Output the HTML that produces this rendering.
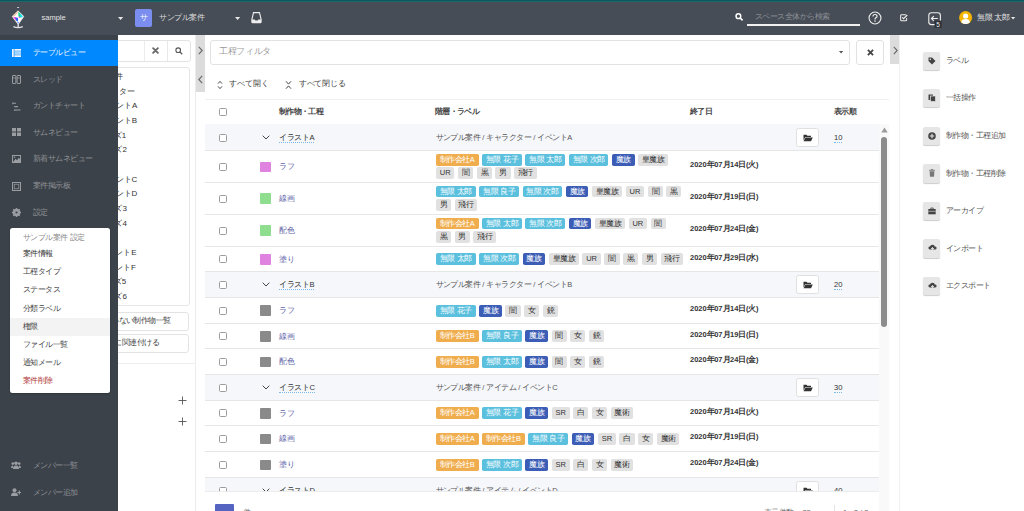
<!DOCTYPE html><html><head><meta charset="utf-8"><style>
*{box-sizing:border-box;margin:0;padding:0}
html,body{width:1024px;height:511px;overflow:hidden;background:#fff}
body{font-family:"Liberation Sans",sans-serif;font-size:7.5px;color:#555;position:relative;line-height:1}
.a{position:absolute;white-space:nowrap}
svg.a{overflow:visible}
.box{position:absolute}
.tg{display:block;height:11.8px;line-height:12.6px;font-size:7.5px;border-radius:1.8px;white-space:nowrap;text-align:center;flex:none}
.tl{display:flex;column-gap:3.6px;margin-bottom:1.8px}
.o{background:#f0ad4e;color:#fff}
.i{background:#5bc0de;color:#fff}
.p{background:#3c5db5;color:#fff}
.g{background:#e1e1e1;color:#333}
</style></head><body>
<div class="box" style="left:0;top:0;width:1024px;height:35px;background:#474d56"></div>
<div class="box" style="left:0;top:0;width:1024px;height:1.4px;background:#07595d"></div>
<div class="box" style="left:0;top:1.4px;width:1024px;height:1px;background:#1f666b"></div>
<svg class="a" style="left:10px;top:5px" width="16" height="25" viewBox="0 0 16 25">
<rect x="7.1" y="2" width="2" height="1.1" rx=".4" fill="#d8d8d8"/>
<path d="M8 5.8 L13.8 11.4 L8.2 19.5 L2.2 11.4 Z" fill="#fff"/>
<path d="M7.8 6.3 L2.9 11.2 L4.2 11.3 L7.6 7.6Z" fill="#ffa060"/>
<path d="M8.3 6.6 L11.6 9.9 L10.6 12.4 L8.4 11.3 Z" fill="#18d890"/>
<path d="M10.2 8.6 L13.2 11.4 L10.6 12.9 Z" fill="#20e0f0"/>
<path d="M8.6 11.5 L10.6 12.3 L9 13.3Z" fill="#d040ff"/>
<path d="M2.9 11.7 L6.2 12.4 L5.6 15.6 Z" fill="#ff38c8"/>
<path d="M5.3 12.3 L8.1 12.9 L7.9 16.4 L5.9 15.6Z" fill="#2c60ff"/>
<path d="M13.3 11.9 L8.6 18.9 L9.6 17.8 L12.2 13.4Z" fill="#ffe860"/>
<path d="M7.1 16.8 L8.9 16.9 L8.2 19Z" fill="#4070ff"/>
<path d="M8 5.8 L13.8 11.4 L8.2 19.5 L2.2 11.4 Z" fill="none" stroke="#ececec" stroke-width="0.7"/>
<rect x="7.5" y="19.3" width="1.4" height="2.6" fill="#eee"/>
<path d="M3.4 21.6 Q8.1 23.8 12.8 21.6" fill="none" stroke="#e4e4e4" stroke-width="1.2"/>
</svg>
<div class="a" style="left:41.5px;top:7.7px;font-size:7.5px;line-height:20px;color:#e4e4e4">sample</div>
<svg class="a" style="left:118px;top:17px" width="5.2" height="3" viewBox="0 0 5.2 3"><path d="M0 0 L5.2 0 L2.6 3Z" fill="#e8e8e8"/></svg>
<div class="box" style="left:135px;top:9px;width:17.2px;height:17.6px;background:#7b8ef0;border-radius:2px"></div>
<div class="a" style="left:139.80px;top:12.05px;font-size:8px;line-height:12px;color:#fff;">サ</div>
<div class="a" style="left:159.00px;top:12.25px;font-size:7.5px;line-height:12px;color:#dcdcdc;"><span style="font-size:8px;letter-spacing:-0.50px">サンプル案件</span></div>
<svg class="a" style="left:235px;top:17px" width="5.2" height="3" viewBox="0 0 5.2 3"><path d="M0 0 L5.2 0 L2.6 3Z" fill="#e8e8e8"/></svg>
<svg class="a" style="left:251px;top:11.8px" width="11" height="11" viewBox="0 0 11 11"><path d="M2.5 0.6 H8.5 L10.1 7.4 V10.1 Q10.1 10.6 9.6 10.6 H1.4 Q0.9 10.6 0.9 10.1 V7.4 Z" fill="none" stroke="#eee" stroke-width="1.1"/><path d="M0.9 7.4 H3.6 L4.4 8.5 H6.6 L7.4 7.4 H10.1 V10.6 H0.9Z" fill="#eee"/></svg>
<svg class="a" style="left:735px;top:13.2px" width="9" height="8" viewBox="0 0 9 8"><circle cx="3.4" cy="3.2" r="2.35" fill="none" stroke="#fff" stroke-width="1.5"/><path d="M5.2 5 L7.6 7.3" stroke="#fff" stroke-width="1.7"/></svg>
<div class="a" style="left:754.50px;top:11.15px;font-size:7.55px;line-height:12px;color:#8d9198;"><span style="font-size:8px;letter-spacing:-0.45px">スペース全体から検索</span></div>
<div class="box" style="left:747px;top:24.4px;width:112.6px;height:1.3px;background:#f0f0f0"></div>
<svg class="a" style="left:868px;top:10.5px" width="14" height="14" viewBox="0 0 14 14"><circle cx="7" cy="7" r="5.95" fill="none" stroke="#eee" stroke-width="1.1"/><path d="M5 5.4 Q5 3.5 7 3.5 Q9 3.5 9 5.2 Q9 6.3 7.8 6.9 Q7 7.3 7 8.4" fill="none" stroke="#eee" stroke-width="1.2"/><rect x="6.35" y="9.4" width="1.3" height="1.4" fill="#eee"/></svg>
<svg class="a" style="left:900.2px;top:13.6px" width="8.3" height="7.4" viewBox="0 0 9 8"><path d="M6.4 0.8 H1.6 Q0.7 0.8 0.7 1.7 V6.4 Q0.7 7.3 1.6 7.3 H6.3 Q7.2 7.3 7.2 6.4 V4.4" fill="none" stroke="#eee" stroke-width="1.1"/><path d="M2.4 3.6 L3.9 5.1 L7.9 1.1" fill="none" stroke="#eee" stroke-width="1.3"/></svg>
<svg class="a" style="left:927.5px;top:11.5px" width="16" height="17" viewBox="0 0 16 17"><rect x="0.8" y="0.8" width="11.6" height="11.8" rx="2.6" fill="none" stroke="#eee" stroke-width="1.1"/><path d="M9.8 6.5 H3.6 M5.8 4.2 L3.5 6.5 L5.8 8.8" fill="none" stroke="#eee" stroke-width="1.2"/><rect x="6.6" y="8.6" width="7" height="7.2" fill="#2c2f34"/><text x="10" y="14.6" font-size="6.5" font-family="Liberation Sans" fill="#eee" text-anchor="middle">5</text></svg>
<svg class="a" style="left:959px;top:11.2px" width="14" height="14" viewBox="0 0 14 14"><circle cx="6.6" cy="6.6" r="6.5" fill="#f5b400"/><circle cx="6.6" cy="5" r="2.6" fill="#fff"/><path d="M2.2 11.2 Q2.6 7.9 6.6 7.9 Q10.6 7.9 11 11.2 Q9 13.1 6.6 13.1 Q4.2 13.1 2.2 11.2Z" fill="#fff"/></svg>
<div class="a" style="left:977.00px;top:12.05px;font-size:7.5px;line-height:12px;color:#e6e6e6;"><span style="font-size:8px;letter-spacing:-0.50px">無限</span> <span style="font-size:8px;letter-spacing:-0.50px">太郎</span></div>
<svg class="a" style="left:1011px;top:16.8px" width="4.2" height="2.6" viewBox="0 0 4.2 2.6"><path d="M0 0 L4.2 0 L2.1 2.6Z" fill="#e8e8e8"/></svg>
<div class="box" style="left:0;top:35px;width:118px;height:476px;background:#3c4249;z-index:10">
<div class="box" style="left:0;top:4.6px;width:118px;height:26.4px;background:#0088ff"></div>
<div class="a" style="left:11.5px;top:13.60px"><svg width="9" height="8" viewBox="0 0 9 8"><rect x="0" y="0" width="9" height="8" fill="#f4f8ff"/><path d="M2.1 0 V8 M2.1 2.1 H9 M2.1 4 H9 M2.1 5.9 H9" stroke="#0088ff" stroke-width="0.65"/></svg></div>
<div class="a" style="left:33.00px;top:12.05px;font-size:7.45px;line-height:12px;color:#eaf3ff;"><span style="font-size:8px;letter-spacing:-0.55px">テーブルビュー</span></div>
<div class="a" style="left:11.5px;top:40.20px"><svg width="9" height="9" viewBox="0 0 9 9"><rect x="0.5" y="0.5" width="3.4" height="8" rx="0.5" fill="none" stroke="#9a9da2" stroke-width="1"/><rect x="5.1" y="0.5" width="3.4" height="8" rx="0.5" fill="none" stroke="#9a9da2" stroke-width="1"/><path d="M0.5 3 H3.9 M5.1 3 H8.5" stroke="#9a9da2" stroke-width="0.8"/></svg></div>
<div class="a" style="left:33.00px;top:38.65px;font-size:7.45px;line-height:12px;color:#8e9196;"><span style="font-size:8px;letter-spacing:-0.55px">スレッド</span></div>
<div class="a" style="left:11.5px;top:66.80px"><svg width="9" height="10" viewBox="0 0 9 10"><path d="M0.3 1.2 H4 M0.8 0.4 V2.2 M2.2 4.6 H6 M3.5 8 H8.5 M2.8 7.2 V9" stroke="#9a9da2" stroke-width="1.1" fill="none"/></svg></div>
<div class="a" style="left:33.00px;top:65.25px;font-size:7.45px;line-height:12px;color:#8e9196;"><span style="font-size:8px;letter-spacing:-0.55px">ガントチャート</span></div>
<div class="a" style="left:11.5px;top:93.40px"><svg width="9" height="8" viewBox="0 0 9 8"><rect x="0" y="0" width="4" height="3.5" fill="#9a9da2"/><rect x="5" y="0" width="4" height="3.5" fill="#9a9da2"/><rect x="0" y="4.5" width="4" height="3.5" fill="#9a9da2"/><rect x="5" y="4.5" width="4" height="3.5" fill="#9a9da2"/></svg></div>
<div class="a" style="left:33.00px;top:91.85px;font-size:7.45px;line-height:12px;color:#8e9196;"><span style="font-size:8px;letter-spacing:-0.55px">サムネビュー</span></div>
<div class="a" style="left:11.5px;top:120.00px"><svg width="9" height="8" viewBox="0 0 9 8"><rect x="0.5" y="0.5" width="8" height="7" fill="none" stroke="#9a9da2" stroke-width="1"/><path d="M1 7 L3.5 3.8 L5 5.3 L6.8 2.8 L8 4 V7Z" fill="#9a9da2"/><circle cx="2.5" cy="2.3" r="0.8" fill="#9a9da2"/></svg></div>
<div class="a" style="left:33.00px;top:118.45px;font-size:7.45px;line-height:12px;color:#8e9196;"><span style="font-size:8px;letter-spacing:-0.55px">新着サムネビュー</span></div>
<div class="a" style="left:11.5px;top:146.60px"><svg width="9" height="9" viewBox="0 0 9 9"><rect x="0.5" y="0.5" width="8" height="8" fill="none" stroke="#9a9da2" stroke-width="1"/><rect x="2.2" y="2.2" width="4.6" height="4.6" fill="none" stroke="#9a9da2" stroke-width="0.7"/></svg></div>
<div class="a" style="left:33.00px;top:145.05px;font-size:7.45px;line-height:12px;color:#8e9196;"><span style="font-size:8px;letter-spacing:-0.55px">案件掲示板</span></div>
<div class="a" style="left:11.5px;top:173.40px"><svg width="9" height="9" viewBox="0 0 9 9"><circle cx="4.5" cy="4.5" r="2.9" fill="none" stroke="#9a9da2" stroke-width="1.8"/><path d="M4.5 0 V9 M0 4.5 H9 M1.3 1.3 L7.7 7.7 M7.7 1.3 L1.3 7.7" stroke="#9a9da2" stroke-width="1.4"/><circle cx="4.5" cy="4.5" r="1.1" fill="#3c4249"/></svg></div>
<div class="a" style="left:33.00px;top:171.85px;font-size:7.45px;line-height:12px;color:#8e9196;"><span style="font-size:8px;letter-spacing:-0.55px">設定</span></div>
<div class="a" style="left:11px;top:425.8px"><svg width="10" height="8" viewBox="0 0 10 8"><circle cx="5" cy="2.2" r="1.8" fill="#9a9da2"/><circle cx="1.8" cy="2.6" r="1.3" fill="#9a9da2"/><circle cx="8.2" cy="2.6" r="1.3" fill="#9a9da2"/><path d="M2 8 Q2 4.6 5 4.6 Q8 4.6 8 8Z M0 7 Q0 4.6 2 4.6 V7Z M10 7 Q10 4.6 8 4.6 V7Z" fill="#9a9da2"/></svg></div>
<div class="a" style="left:33.00px;top:424.65px;font-size:7.45px;line-height:12px;color:#8e9196;"><span style="font-size:8px;letter-spacing:-0.55px">メンバー一覧</span></div>
<div class="a" style="left:11px;top:452.8px"><svg width="10" height="8" viewBox="0 0 10 8"><circle cx="3.5" cy="2.2" r="2" fill="#9a9da2"/><path d="M0 8 Q0 4.6 3.5 4.6 Q7 4.6 7 8Z" fill="#9a9da2"/><path d="M8.3 2.5 V6.5 M6.3 4.5 H10" stroke="#9a9da2" stroke-width="1.1"/></svg></div>
<div class="a" style="left:33.00px;top:451.65px;font-size:7.45px;line-height:12px;color:#8e9196;"><span style="font-size:8px;letter-spacing:-0.55px">メンバー追加</span></div>
</div>
<div class="box" style="left:10.3px;top:227.5px;width:99.4px;height:165.6px;background:#fff;border-radius:2.5px;z-index:11;box-shadow:0 1px 2px rgba(0,0,0,.22)">
<div class="box" style="left:0;top:90.1px;width:99.4px;height:18.3px;background:#f3f3f3"></div>
<div class="a" style="left:12.70px;top:4.35px;font-size:7.45px;line-height:12px;color:#8a8a8a;"><span style="font-size:8px;letter-spacing:-0.55px">サンプル案件</span> <span style="font-size:8px;letter-spacing:-0.55px">設定</span></div>
<div class="a" style="left:12.70px;top:20.55px;font-size:7.45px;line-height:12px;color:#333;"><span style="font-size:8px;letter-spacing:-0.55px">案件情報</span></div>
<div class="a" style="left:12.70px;top:38.35px;font-size:7.45px;line-height:12px;color:#444;"><span style="font-size:8px;letter-spacing:-0.55px">工程タイプ</span></div>
<div class="a" style="left:12.70px;top:56.75px;font-size:7.45px;line-height:12px;color:#444;"><span style="font-size:8px;letter-spacing:-0.55px">ステータス</span></div>
<div class="a" style="left:12.70px;top:75.75px;font-size:7.45px;line-height:12px;color:#444;"><span style="font-size:8px;letter-spacing:-0.55px">分類ラベル</span></div>
<div class="a" style="left:12.70px;top:93.55px;font-size:7.45px;line-height:12px;color:#444;"><span style="font-size:8px;letter-spacing:-0.55px">権限</span></div>
<div class="a" style="left:12.70px;top:111.75px;font-size:7.45px;line-height:12px;color:#444;"><span style="font-size:8px;letter-spacing:-0.55px">ファイル一覧</span></div>
<div class="a" style="left:12.70px;top:129.55px;font-size:7.45px;line-height:12px;color:#444;"><span style="font-size:8px;letter-spacing:-0.55px">通知メール</span></div>
<div class="a" style="left:12.70px;top:147.35px;font-size:7.45px;line-height:12px;color:#b23b3e;"><span style="font-size:8px;letter-spacing:-0.55px">案件削除</span></div>
</div>
<div class="box" style="left:118px;top:35px;width:77.5px;height:476px;background:#fff;border-right:1px solid #ececec"></div>
<div class="box" style="left:100px;top:40px;width:90.6px;height:21.5px;border:1px solid #e3e3e3;border-radius:3px;background:#fff"></div>
<div class="box" style="left:144px;top:40.5px;width:1px;height:20.5px;background:#ececec"></div>
<div class="box" style="left:167px;top:40.5px;width:1px;height:20.5px;background:#e8e8e8"></div>
<svg class="a" style="left:152.4px;top:46.8px" width="7" height="7" viewBox="0 0 7 7"><path d="M1.1 1.1 L5.9 5.9 M5.9 1.1 L1.1 5.9" stroke="#666" stroke-width="1.8" stroke-linecap="round"/></svg>
<svg class="a" style="left:174.6px;top:46.5px" width="8" height="8" viewBox="0 0 8 8"><circle cx="3.2" cy="3.2" r="2.3" fill="none" stroke="#555" stroke-width="1.1"/><path d="M4.9 4.9 L7.2 7.2" stroke="#555" stroke-width="1.3"/></svg>
<div class="box" style="left:100px;top:67.3px;width:89.6px;height:239px;border:1px solid #e6e6e6;border-radius:3px;background:#fff"></div>
<div class="a" style="right:901.00px;top:71.05px;font-size:8px;line-height:12px;color:#333;">案件</div>
<div class="a" style="right:888.70px;top:85.75px;font-size:8px;line-height:12px;color:#333;">キャラクター</div>
<div class="a" style="right:886.70px;top:100.45px;font-size:8px;line-height:12px;color:#333;">イベントA</div>
<div class="a" style="right:887.00px;top:115.05px;font-size:8px;line-height:12px;color:#333;">イベントB</div>
<div class="a" style="right:897.70px;top:129.75px;font-size:8px;line-height:12px;color:#333;">グッズ1</div>
<div class="a" style="right:897.10px;top:144.45px;font-size:8px;line-height:12px;color:#333;">グッズ2</div>
<div class="a" style="right:886.70px;top:173.75px;font-size:8px;line-height:12px;color:#333;">イベントC</div>
<div class="a" style="right:886.70px;top:188.45px;font-size:8px;line-height:12px;color:#333;">イベントD</div>
<div class="a" style="right:897.10px;top:203.05px;font-size:8px;line-height:12px;color:#333;">グッズ3</div>
<div class="a" style="right:897.10px;top:217.75px;font-size:8px;line-height:12px;color:#333;">グッズ4</div>
<div class="a" style="right:887.50px;top:247.05px;font-size:8px;line-height:12px;color:#333;">イベントE</div>
<div class="a" style="right:888.00px;top:261.75px;font-size:8px;line-height:12px;color:#333;">イベントF</div>
<div class="a" style="right:897.70px;top:276.45px;font-size:8px;line-height:12px;color:#333;">グッズ5</div>
<div class="a" style="right:897.10px;top:291.05px;font-size:8px;line-height:12px;color:#333;">グッズ6</div>
<div class="box" style="left:100px;top:311.5px;width:89.2px;height:19px;border:1px solid #e3e3e3;border-radius:3px"></div>
<div class="a" style="right:853.30px;top:315.05px;font-size:7.45px;line-height:12px;color:#444;"><span style="font-size:8px;letter-spacing:-0.55px">関連付けられていない制作物一覧</span></div>
<div class="box" style="left:100px;top:333.7px;width:89.2px;height:19px;border:1px solid #e3e3e3;border-radius:3px"></div>
<div class="a" style="right:865.00px;top:337.25px;font-size:7.45px;line-height:12px;color:#444;"><span style="font-size:8px;letter-spacing:-0.55px">選択した階層に関連付ける</span></div>
<div class="box" style="left:118px;top:362.5px;width:77px;height:1px;background:#eee"></div>
<svg class="a" style="left:177.5px;top:396.0px" width="9" height="9" viewBox="0 0 9 9"><path d="M4.5 0.5 V8.5 M0.5 4.5 H8.5" stroke="#555" stroke-width="0.9"/></svg>
<svg class="a" style="left:177.5px;top:416.8px" width="9" height="9" viewBox="0 0 9 9"><path d="M4.5 0.5 V8.5 M0.5 4.5 H8.5" stroke="#555" stroke-width="0.9"/></svg>
<div class="box" style="left:195.5px;top:35px;width:9.5px;height:57px;background:#dcdcdc"></div>
<svg class="a" style="left:197.5px;top:46px" width="5" height="9" viewBox="0 0 5 9"><path d="M0.8 0.8 L4.2 4.5 L0.8 8.2" fill="none" stroke="#6a6a6a" stroke-width="1.15"/></svg>
<svg class="a" style="left:197.5px;top:74.5px" width="5" height="9" viewBox="0 0 5 9"><path d="M4.2 0.8 L0.8 4.5 L4.2 8.2" fill="none" stroke="#6a6a6a" stroke-width="1.15"/></svg>
<div class="box" style="left:890px;top:35px;width:9.7px;height:28.6px;background:#dcdcdc"></div>
<svg class="a" style="left:892.5px;top:45.5px" width="5" height="9" viewBox="0 0 5 9"><path d="M0.8 0.8 L4.2 4.5 L0.8 8.2" fill="none" stroke="#6a6a6a" stroke-width="1.15"/></svg>
<div class="box" style="left:210.3px;top:40px;width:640.2px;height:24.5px;border:1px solid #e2e2e2;border-radius:3px"></div>
<div class="a" style="left:219.30px;top:45.25px;font-size:8.6px;line-height:12px;color:#9a9a9a;"><span style="font-size:9px;letter-spacing:-0.40px">工程フィルタ</span></div>
<svg class="a" style="left:838.8px;top:51.3px" width="4.2" height="2.6" viewBox="0 0 4.2 2.6"><path d="M0 0 L4.2 0 L2.1 2.6Z" fill="#555"/></svg>
<div class="box" style="left:856px;top:40px;width:27.6px;height:24.5px;border:1px solid #e2e2e2;border-radius:3px"></div>
<svg class="a" style="left:866.5px;top:49px" width="7" height="7" viewBox="0 0 7 7"><path d="M0.9 0.9 L6.1 6.1 M6.1 0.9 L0.9 6.1" stroke="#444" stroke-width="1.8"/></svg>
<svg class="a" style="left:216.5px;top:79.8px" width="6" height="10" viewBox="0 0 6 10"><path d="M1 3.6 L3 1.4 L5 3.6 M1 6.4 L3 8.6 L5 6.4" fill="none" stroke="#444" stroke-width="1"/></svg>
<div class="a" style="left:229.00px;top:78.25px;font-size:8px;line-height:12px;color:#444;">すべて開く</div>
<svg class="a" style="left:284.5px;top:79.8px" width="7" height="10" viewBox="0 0 7 10"><path d="M1 1.3 L3.5 4.1 L6 1.3 M1 8.7 L3.5 5.9 L6 8.7" fill="none" stroke="#444" stroke-width="1"/></svg>
<div class="a" style="left:298.80px;top:78.25px;font-size:7.85px;line-height:12px;color:#444;"><span style="font-size:8px;letter-spacing:-0.15px">すべて閉じる</span></div>
<div class="box" style="left:205px;top:98.5px;width:684px;height:1.8px;background:#efefef"></div>
<div class="box" style="left:218.8px;top:107.80px;width:8px;height:8px;border:1px solid #9c9c9c;border-radius:1.6px;background:#fff"></div>
<div class="a" style="left:279.00px;top:106.25px;font-size:7.35px;line-height:12px;color:#444;font-weight:bold;"><span style="font-size:8px;letter-spacing:-0.65px">制作物・工程</span></div>
<div class="a" style="left:435.00px;top:106.25px;font-size:7.35px;line-height:12px;color:#444;font-weight:bold;"><span style="font-size:8px;letter-spacing:-0.65px">階層・ラベル</span></div>
<div class="a" style="left:690.00px;top:106.25px;font-size:7.35px;line-height:12px;color:#444;font-weight:bold;"><span style="font-size:8px;letter-spacing:-0.65px">終了日</span></div>
<div class="a" style="left:834.00px;top:106.25px;font-size:7.35px;line-height:12px;color:#444;font-weight:bold;"><span style="font-size:8px;letter-spacing:-0.65px">表示順</span></div>
<div class="box" style="left:0;top:124.0px;width:889px;height:367.40px;overflow:hidden">
<div class="box" style="left:205px;top:0.00px;width:673.5px;height:27.10px;background:#f5f7fb;border-bottom:1px solid #e6e6e6"></div>
<div class="box" style="left:218.8px;top:9.55px;width:8px;height:8px;border:1px solid #9c9c9c;border-radius:1.6px;background:#fff"></div>
<svg class="a" style="left:262px;top:11.15px" width="8" height="5" viewBox="0 0 8 5"><path d="M0.7 0.7 L4 4 L7.3 0.7" fill="none" stroke="#444" stroke-width="1"/></svg>
<div class="a" style="left:279.00px;top:9.50px;font-size:7.6px;line-height:8.6px;color:#333;border-bottom:1px dotted #7cb8e6;"><span style="font-size:8px;letter-spacing:-0.40px">イラスト</span>A</div>
<div class="a" style="left:435.50px;top:7.80px;font-size:7.45px;line-height:12px;color:#555;"><span style="font-size:8px;letter-spacing:-0.55px">サンプル案件</span> / <span style="font-size:8px;letter-spacing:-0.55px">キャラクター</span> / <span style="font-size:8px;letter-spacing:-0.55px">イベント</span>A</div>
<div class="box" style="left:796.4px;top:3.95px;width:22.8px;height:19.2px;border:1px solid #e0e0e0;border-radius:2.5px;background:#fff"></div>
<svg class="a" style="left:803px;top:9.95px" width="10" height="8" viewBox="0 0 10 8"><path d="M0.5 0.8 H3.5 L4.4 1.8 H8 V2.9 H2.2 L0.5 6.6Z" fill="#333"/><path d="M2.4 3.5 H9.8 L8 7.3 H0.6Z" fill="#333"/></svg>
<div class="a" style="left:834.00px;top:9.50px;font-size:7.6px;line-height:8.6px;color:#333;border-bottom:1px dotted #7cb8e6;">10</div>
<div class="box" style="left:205px;top:27.10px;width:673.5px;height:31.65px;border-bottom:1px solid #e6e6e6"></div>
<div class="box" style="left:218.8px;top:38.93px;width:8px;height:8px;border:1px solid #9c9c9c;border-radius:1.6px;background:#fff"></div>
<div class="box" style="left:260.3px;top:37.58px;width:11px;height:10.7px;border-radius:1px;background:#e083e0"></div>
<div class="a" style="left:279.00px;top:37.18px;font-size:7.5px;line-height:12px;color:#5b5ea6;"><span style="font-size:8px;letter-spacing:-0.50px">ラフ</span></div>
<div class="box" style="left:436px;top:29.73px;width:290px"><div class="tl"><span class="tg o" style="width:42.60px"><span style="font-size:8px;letter-spacing:-0.50px">制作会社</span>A</span><span class="tg i" style="width:39.68px"><span style="font-size:8px;letter-spacing:-0.50px">無限</span> <span style="font-size:8px;letter-spacing:-0.50px">花子</span></span><span class="tg i" style="width:39.68px"><span style="font-size:8px;letter-spacing:-0.50px">無限</span> <span style="font-size:8px;letter-spacing:-0.50px">太郎</span></span><span class="tg i" style="width:39.68px"><span style="font-size:8px;letter-spacing:-0.50px">無限</span> <span style="font-size:8px;letter-spacing:-0.50px">次郎</span></span><span class="tg p" style="width:22.60px"><span style="font-size:8px;letter-spacing:-0.50px">魔族</span></span><span class="tg g" style="width:30.10px"><span style="font-size:8px;letter-spacing:-0.50px">皇魔族</span></span></div><div class="tl"><span class="tg g" style="width:18.44px">UR</span><span class="tg g" style="width:15.10px"><span style="font-size:8px;letter-spacing:-0.50px">闇</span></span><span class="tg g" style="width:15.10px"><span style="font-size:8px;letter-spacing:-0.50px">黒</span></span><span class="tg g" style="width:15.10px"><span style="font-size:8px;letter-spacing:-0.50px">男</span></span><span class="tg g" style="width:22.60px"><span style="font-size:8px;letter-spacing:-0.50px">飛行</span></span></div></div>
<div class="a" style="left:690.00px;top:35.38px;font-size:7.5px;line-height:12px;color:#333;font-weight:bold;">2020<span style="font-size:8px;letter-spacing:-0.50px">年</span>07<span style="font-size:8px;letter-spacing:-0.50px">月</span>14<span style="font-size:8px;letter-spacing:-0.50px">日</span>(<span style="font-size:8px;letter-spacing:-0.50px">火</span>)</div>
<div class="box" style="left:205px;top:58.75px;width:673.5px;height:32.05px;border-bottom:1px solid #e6e6e6"></div>
<div class="box" style="left:218.8px;top:70.78px;width:8px;height:8px;border:1px solid #9c9c9c;border-radius:1.6px;background:#fff"></div>
<div class="box" style="left:260.3px;top:69.43px;width:11px;height:10.7px;border-radius:1px;background:#8fdd8f"></div>
<div class="a" style="left:279.00px;top:69.03px;font-size:7.5px;line-height:12px;color:#5b5ea6;"><span style="font-size:8px;letter-spacing:-0.50px">線画</span></div>
<div class="box" style="left:436px;top:61.58px;width:290px"><div class="tl"><span class="tg i" style="width:39.68px"><span style="font-size:8px;letter-spacing:-0.50px">無限</span> <span style="font-size:8px;letter-spacing:-0.50px">太郎</span></span><span class="tg i" style="width:39.68px"><span style="font-size:8px;letter-spacing:-0.50px">無限</span> <span style="font-size:8px;letter-spacing:-0.50px">良子</span></span><span class="tg i" style="width:39.68px"><span style="font-size:8px;letter-spacing:-0.50px">無限</span> <span style="font-size:8px;letter-spacing:-0.50px">次郎</span></span><span class="tg p" style="width:22.60px"><span style="font-size:8px;letter-spacing:-0.50px">魔族</span></span><span class="tg g" style="width:30.10px"><span style="font-size:8px;letter-spacing:-0.50px">皇魔族</span></span><span class="tg g" style="width:18.44px">UR</span><span class="tg g" style="width:15.10px"><span style="font-size:8px;letter-spacing:-0.50px">闇</span></span><span class="tg g" style="width:15.10px"><span style="font-size:8px;letter-spacing:-0.50px">黒</span></span></div><div class="tl"><span class="tg g" style="width:15.10px"><span style="font-size:8px;letter-spacing:-0.50px">男</span></span><span class="tg g" style="width:22.60px"><span style="font-size:8px;letter-spacing:-0.50px">飛行</span></span></div></div>
<div class="a" style="left:690.00px;top:67.23px;font-size:7.5px;line-height:12px;color:#333;font-weight:bold;">2020<span style="font-size:8px;letter-spacing:-0.50px">年</span>07<span style="font-size:8px;letter-spacing:-0.50px">月</span>19<span style="font-size:8px;letter-spacing:-0.50px">日</span>(<span style="font-size:8px;letter-spacing:-0.50px">日</span>)</div>
<div class="box" style="left:205px;top:90.80px;width:673.5px;height:32.00px;border-bottom:1px solid #e6e6e6"></div>
<div class="box" style="left:218.8px;top:102.80px;width:8px;height:8px;border:1px solid #9c9c9c;border-radius:1.6px;background:#fff"></div>
<div class="box" style="left:260.3px;top:101.45px;width:11px;height:10.7px;border-radius:1px;background:#8fdd8f"></div>
<div class="a" style="left:279.00px;top:101.05px;font-size:7.5px;line-height:12px;color:#5b5ea6;"><span style="font-size:8px;letter-spacing:-0.50px">配色</span></div>
<div class="box" style="left:436px;top:93.60px;width:290px"><div class="tl"><span class="tg o" style="width:42.60px"><span style="font-size:8px;letter-spacing:-0.50px">制作会社</span>A</span><span class="tg i" style="width:39.68px"><span style="font-size:8px;letter-spacing:-0.50px">無限</span> <span style="font-size:8px;letter-spacing:-0.50px">太郎</span></span><span class="tg i" style="width:39.68px"><span style="font-size:8px;letter-spacing:-0.50px">無限</span> <span style="font-size:8px;letter-spacing:-0.50px">次郎</span></span><span class="tg p" style="width:22.60px"><span style="font-size:8px;letter-spacing:-0.50px">魔族</span></span><span class="tg g" style="width:30.10px"><span style="font-size:8px;letter-spacing:-0.50px">皇魔族</span></span><span class="tg g" style="width:18.44px">UR</span><span class="tg g" style="width:15.10px"><span style="font-size:8px;letter-spacing:-0.50px">闇</span></span></div><div class="tl"><span class="tg g" style="width:15.10px"><span style="font-size:8px;letter-spacing:-0.50px">黒</span></span><span class="tg g" style="width:15.10px"><span style="font-size:8px;letter-spacing:-0.50px">男</span></span><span class="tg g" style="width:22.60px"><span style="font-size:8px;letter-spacing:-0.50px">飛行</span></span></div></div>
<div class="a" style="left:690.00px;top:99.25px;font-size:7.5px;line-height:12px;color:#333;font-weight:bold;">2020<span style="font-size:8px;letter-spacing:-0.50px">年</span>07<span style="font-size:8px;letter-spacing:-0.50px">月</span>24<span style="font-size:8px;letter-spacing:-0.50px">日</span>(<span style="font-size:8px;letter-spacing:-0.50px">金</span>)</div>
<div class="box" style="left:205px;top:122.80px;width:673.5px;height:25.00px;border-bottom:1px solid #e6e6e6"></div>
<div class="box" style="left:218.8px;top:131.30px;width:8px;height:8px;border:1px solid #9c9c9c;border-radius:1.6px;background:#fff"></div>
<div class="box" style="left:260.3px;top:129.95px;width:11px;height:10.7px;border-radius:1px;background:#e083e0"></div>
<div class="a" style="left:279.00px;top:129.55px;font-size:7.5px;line-height:12px;color:#5b5ea6;"><span style="font-size:8px;letter-spacing:-0.50px">塗り</span></div>
<div class="box" style="left:436px;top:129.40px;width:290px"><div class="tl"><span class="tg i" style="width:39.68px"><span style="font-size:8px;letter-spacing:-0.50px">無限</span> <span style="font-size:8px;letter-spacing:-0.50px">太郎</span></span><span class="tg i" style="width:39.68px"><span style="font-size:8px;letter-spacing:-0.50px">無限</span> <span style="font-size:8px;letter-spacing:-0.50px">次郎</span></span><span class="tg p" style="width:22.60px"><span style="font-size:8px;letter-spacing:-0.50px">魔族</span></span><span class="tg g" style="width:30.10px"><span style="font-size:8px;letter-spacing:-0.50px">皇魔族</span></span><span class="tg g" style="width:18.44px">UR</span><span class="tg g" style="width:15.10px"><span style="font-size:8px;letter-spacing:-0.50px">闇</span></span><span class="tg g" style="width:15.10px"><span style="font-size:8px;letter-spacing:-0.50px">黒</span></span><span class="tg g" style="width:15.10px"><span style="font-size:8px;letter-spacing:-0.50px">男</span></span><span class="tg g" style="width:22.60px"><span style="font-size:8px;letter-spacing:-0.50px">飛行</span></span></div></div>
<div class="a" style="left:690.00px;top:127.75px;font-size:7.5px;line-height:12px;color:#333;font-weight:bold;">2020<span style="font-size:8px;letter-spacing:-0.50px">年</span>07<span style="font-size:8px;letter-spacing:-0.50px">月</span>29<span style="font-size:8px;letter-spacing:-0.50px">日</span>(<span style="font-size:8px;letter-spacing:-0.50px">水</span>)</div>
<div class="box" style="left:205px;top:147.80px;width:673.5px;height:26.00px;background:#f5f7fb;border-bottom:1px solid #e6e6e6"></div>
<div class="box" style="left:218.8px;top:156.80px;width:8px;height:8px;border:1px solid #9c9c9c;border-radius:1.6px;background:#fff"></div>
<svg class="a" style="left:262px;top:158.40px" width="8" height="5" viewBox="0 0 8 5"><path d="M0.7 0.7 L4 4 L7.3 0.7" fill="none" stroke="#444" stroke-width="1"/></svg>
<div class="a" style="left:279.00px;top:156.75px;font-size:7.6px;line-height:8.6px;color:#333;border-bottom:1px dotted #7cb8e6;"><span style="font-size:8px;letter-spacing:-0.40px">イラスト</span>B</div>
<div class="a" style="left:435.50px;top:155.05px;font-size:7.45px;line-height:12px;color:#555;"><span style="font-size:8px;letter-spacing:-0.55px">サンプル案件</span> / <span style="font-size:8px;letter-spacing:-0.55px">キャラクター</span> / <span style="font-size:8px;letter-spacing:-0.55px">イベント</span>B</div>
<div class="box" style="left:796.4px;top:151.20px;width:22.8px;height:19.2px;border:1px solid #e0e0e0;border-radius:2.5px;background:#fff"></div>
<svg class="a" style="left:803px;top:157.20px" width="10" height="8" viewBox="0 0 10 8"><path d="M0.5 0.8 H3.5 L4.4 1.8 H8 V2.9 H2.2 L0.5 6.6Z" fill="#333"/><path d="M2.4 3.5 H9.8 L8 7.3 H0.6Z" fill="#333"/></svg>
<div class="a" style="left:834.00px;top:156.75px;font-size:7.6px;line-height:8.6px;color:#333;border-bottom:1px dotted #7cb8e6;">20</div>
<div class="box" style="left:205px;top:173.80px;width:673.5px;height:26.00px;border-bottom:1px solid #e6e6e6"></div>
<div class="box" style="left:218.8px;top:182.80px;width:8px;height:8px;border:1px solid #9c9c9c;border-radius:1.6px;background:#fff"></div>
<div class="box" style="left:260.3px;top:181.45px;width:11px;height:10.7px;border-radius:1px;background:#8a8a8a"></div>
<div class="a" style="left:279.00px;top:181.05px;font-size:7.5px;line-height:12px;color:#5b5ea6;"><span style="font-size:8px;letter-spacing:-0.50px">ラフ</span></div>
<div class="box" style="left:436px;top:180.90px;width:290px"><div class="tl"><span class="tg i" style="width:39.68px"><span style="font-size:8px;letter-spacing:-0.50px">無限</span> <span style="font-size:8px;letter-spacing:-0.50px">花子</span></span><span class="tg p" style="width:22.60px"><span style="font-size:8px;letter-spacing:-0.50px">魔族</span></span><span class="tg g" style="width:15.10px"><span style="font-size:8px;letter-spacing:-0.50px">闇</span></span><span class="tg g" style="width:15.10px"><span style="font-size:8px;letter-spacing:-0.50px">女</span></span><span class="tg g" style="width:15.10px"><span style="font-size:8px;letter-spacing:-0.50px">銃</span></span></div></div>
<div class="a" style="left:690.00px;top:179.25px;font-size:7.5px;line-height:12px;color:#333;font-weight:bold;">2020<span style="font-size:8px;letter-spacing:-0.50px">年</span>07<span style="font-size:8px;letter-spacing:-0.50px">月</span>14<span style="font-size:8px;letter-spacing:-0.50px">日</span>(<span style="font-size:8px;letter-spacing:-0.50px">火</span>)</div>
<div class="box" style="left:205px;top:199.80px;width:673.5px;height:25.00px;border-bottom:1px solid #e6e6e6"></div>
<div class="box" style="left:218.8px;top:208.30px;width:8px;height:8px;border:1px solid #9c9c9c;border-radius:1.6px;background:#fff"></div>
<div class="box" style="left:260.3px;top:206.95px;width:11px;height:10.7px;border-radius:1px;background:#8a8a8a"></div>
<div class="a" style="left:279.00px;top:206.55px;font-size:7.5px;line-height:12px;color:#5b5ea6;"><span style="font-size:8px;letter-spacing:-0.50px">線画</span></div>
<div class="box" style="left:436px;top:206.40px;width:290px"><div class="tl"><span class="tg o" style="width:42.60px"><span style="font-size:8px;letter-spacing:-0.50px">制作会社</span>B</span><span class="tg i" style="width:39.68px"><span style="font-size:8px;letter-spacing:-0.50px">無限</span> <span style="font-size:8px;letter-spacing:-0.50px">良子</span></span><span class="tg p" style="width:22.60px"><span style="font-size:8px;letter-spacing:-0.50px">魔族</span></span><span class="tg g" style="width:15.10px"><span style="font-size:8px;letter-spacing:-0.50px">闇</span></span><span class="tg g" style="width:15.10px"><span style="font-size:8px;letter-spacing:-0.50px">女</span></span><span class="tg g" style="width:15.10px"><span style="font-size:8px;letter-spacing:-0.50px">銃</span></span></div></div>
<div class="a" style="left:690.00px;top:204.75px;font-size:7.5px;line-height:12px;color:#333;font-weight:bold;">2020<span style="font-size:8px;letter-spacing:-0.50px">年</span>07<span style="font-size:8px;letter-spacing:-0.50px">月</span>19<span style="font-size:8px;letter-spacing:-0.50px">日</span>(<span style="font-size:8px;letter-spacing:-0.50px">日</span>)</div>
<div class="box" style="left:205px;top:224.80px;width:673.5px;height:26.10px;border-bottom:1px solid #e6e6e6"></div>
<div class="box" style="left:218.8px;top:233.85px;width:8px;height:8px;border:1px solid #9c9c9c;border-radius:1.6px;background:#fff"></div>
<div class="box" style="left:260.3px;top:232.50px;width:11px;height:10.7px;border-radius:1px;background:#8a8a8a"></div>
<div class="a" style="left:279.00px;top:232.10px;font-size:7.5px;line-height:12px;color:#5b5ea6;"><span style="font-size:8px;letter-spacing:-0.50px">配色</span></div>
<div class="box" style="left:436px;top:231.95px;width:290px"><div class="tl"><span class="tg o" style="width:42.60px"><span style="font-size:8px;letter-spacing:-0.50px">制作会社</span>B</span><span class="tg i" style="width:39.68px"><span style="font-size:8px;letter-spacing:-0.50px">無限</span> <span style="font-size:8px;letter-spacing:-0.50px">太郎</span></span><span class="tg p" style="width:22.60px"><span style="font-size:8px;letter-spacing:-0.50px">魔族</span></span><span class="tg g" style="width:15.10px"><span style="font-size:8px;letter-spacing:-0.50px">闇</span></span><span class="tg g" style="width:15.10px"><span style="font-size:8px;letter-spacing:-0.50px">女</span></span><span class="tg g" style="width:15.10px"><span style="font-size:8px;letter-spacing:-0.50px">銃</span></span></div></div>
<div class="a" style="left:690.00px;top:230.30px;font-size:7.5px;line-height:12px;color:#333;font-weight:bold;">2020<span style="font-size:8px;letter-spacing:-0.50px">年</span>07<span style="font-size:8px;letter-spacing:-0.50px">月</span>24<span style="font-size:8px;letter-spacing:-0.50px">日</span>(<span style="font-size:8px;letter-spacing:-0.50px">金</span>)</div>
<div class="box" style="left:205px;top:250.90px;width:673.5px;height:25.80px;background:#f5f7fb;border-bottom:1px solid #e6e6e6"></div>
<div class="box" style="left:218.8px;top:259.80px;width:8px;height:8px;border:1px solid #9c9c9c;border-radius:1.6px;background:#fff"></div>
<svg class="a" style="left:262px;top:261.40px" width="8" height="5" viewBox="0 0 8 5"><path d="M0.7 0.7 L4 4 L7.3 0.7" fill="none" stroke="#444" stroke-width="1"/></svg>
<div class="a" style="left:279.00px;top:259.75px;font-size:7.6px;line-height:8.6px;color:#333;border-bottom:1px dotted #7cb8e6;"><span style="font-size:8px;letter-spacing:-0.40px">イラスト</span>C</div>
<div class="a" style="left:435.50px;top:258.05px;font-size:7.45px;line-height:12px;color:#555;"><span style="font-size:8px;letter-spacing:-0.55px">サンプル案件</span> / <span style="font-size:8px;letter-spacing:-0.55px">アイテム</span> / <span style="font-size:8px;letter-spacing:-0.55px">イベント</span>C</div>
<div class="box" style="left:796.4px;top:254.20px;width:22.8px;height:19.2px;border:1px solid #e0e0e0;border-radius:2.5px;background:#fff"></div>
<svg class="a" style="left:803px;top:260.20px" width="10" height="8" viewBox="0 0 10 8"><path d="M0.5 0.8 H3.5 L4.4 1.8 H8 V2.9 H2.2 L0.5 6.6Z" fill="#333"/><path d="M2.4 3.5 H9.8 L8 7.3 H0.6Z" fill="#333"/></svg>
<div class="a" style="left:834.00px;top:259.75px;font-size:7.6px;line-height:8.6px;color:#333;border-bottom:1px dotted #7cb8e6;">30</div>
<div class="box" style="left:205px;top:276.70px;width:673.5px;height:25.30px;border-bottom:1px solid #e6e6e6"></div>
<div class="box" style="left:218.8px;top:285.35px;width:8px;height:8px;border:1px solid #9c9c9c;border-radius:1.6px;background:#fff"></div>
<div class="box" style="left:260.3px;top:284.00px;width:11px;height:10.7px;border-radius:1px;background:#8a8a8a"></div>
<div class="a" style="left:279.00px;top:283.60px;font-size:7.5px;line-height:12px;color:#5b5ea6;"><span style="font-size:8px;letter-spacing:-0.50px">ラフ</span></div>
<div class="box" style="left:436px;top:283.45px;width:290px"><div class="tl"><span class="tg o" style="width:42.60px"><span style="font-size:8px;letter-spacing:-0.50px">制作会社</span>A</span><span class="tg i" style="width:39.68px"><span style="font-size:8px;letter-spacing:-0.50px">無限</span> <span style="font-size:8px;letter-spacing:-0.50px">花子</span></span><span class="tg p" style="width:22.60px"><span style="font-size:8px;letter-spacing:-0.50px">魔族</span></span><span class="tg g" style="width:18.02px">SR</span><span class="tg g" style="width:15.10px"><span style="font-size:8px;letter-spacing:-0.50px">白</span></span><span class="tg g" style="width:15.10px"><span style="font-size:8px;letter-spacing:-0.50px">女</span></span><span class="tg g" style="width:22.60px"><span style="font-size:8px;letter-spacing:-0.50px">魔術</span></span></div></div>
<div class="a" style="left:690.00px;top:281.80px;font-size:7.5px;line-height:12px;color:#333;font-weight:bold;">2020<span style="font-size:8px;letter-spacing:-0.50px">年</span>07<span style="font-size:8px;letter-spacing:-0.50px">月</span>14<span style="font-size:8px;letter-spacing:-0.50px">日</span>(<span style="font-size:8px;letter-spacing:-0.50px">火</span>)</div>
<div class="box" style="left:205px;top:302.00px;width:673.5px;height:26.00px;border-bottom:1px solid #e6e6e6"></div>
<div class="box" style="left:218.8px;top:311.00px;width:8px;height:8px;border:1px solid #9c9c9c;border-radius:1.6px;background:#fff"></div>
<div class="box" style="left:260.3px;top:309.65px;width:11px;height:10.7px;border-radius:1px;background:#8a8a8a"></div>
<div class="a" style="left:279.00px;top:309.25px;font-size:7.5px;line-height:12px;color:#5b5ea6;"><span style="font-size:8px;letter-spacing:-0.50px">線画</span></div>
<div class="box" style="left:436px;top:309.10px;width:290px"><div class="tl"><span class="tg o" style="width:42.60px"><span style="font-size:8px;letter-spacing:-0.50px">制作会社</span>A</span><span class="tg o" style="width:42.60px"><span style="font-size:8px;letter-spacing:-0.50px">制作会社</span>B</span><span class="tg i" style="width:39.68px"><span style="font-size:8px;letter-spacing:-0.50px">無限</span> <span style="font-size:8px;letter-spacing:-0.50px">良子</span></span><span class="tg p" style="width:22.60px"><span style="font-size:8px;letter-spacing:-0.50px">魔族</span></span><span class="tg g" style="width:18.02px">SR</span><span class="tg g" style="width:15.10px"><span style="font-size:8px;letter-spacing:-0.50px">白</span></span><span class="tg g" style="width:15.10px"><span style="font-size:8px;letter-spacing:-0.50px">女</span></span><span class="tg g" style="width:22.60px"><span style="font-size:8px;letter-spacing:-0.50px">魔術</span></span></div></div>
<div class="a" style="left:690.00px;top:307.45px;font-size:7.5px;line-height:12px;color:#333;font-weight:bold;">2020<span style="font-size:8px;letter-spacing:-0.50px">年</span>07<span style="font-size:8px;letter-spacing:-0.50px">月</span>19<span style="font-size:8px;letter-spacing:-0.50px">日</span>(<span style="font-size:8px;letter-spacing:-0.50px">日</span>)</div>
<div class="box" style="left:205px;top:328.00px;width:673.5px;height:25.80px;border-bottom:1px solid #e6e6e6"></div>
<div class="box" style="left:218.8px;top:336.90px;width:8px;height:8px;border:1px solid #9c9c9c;border-radius:1.6px;background:#fff"></div>
<div class="box" style="left:260.3px;top:335.55px;width:11px;height:10.7px;border-radius:1px;background:#8a8a8a"></div>
<div class="a" style="left:279.00px;top:335.15px;font-size:7.5px;line-height:12px;color:#5b5ea6;"><span style="font-size:8px;letter-spacing:-0.50px">塗り</span></div>
<div class="box" style="left:436px;top:335.00px;width:290px"><div class="tl"><span class="tg o" style="width:42.60px"><span style="font-size:8px;letter-spacing:-0.50px">制作会社</span>B</span><span class="tg i" style="width:39.68px"><span style="font-size:8px;letter-spacing:-0.50px">無限</span> <span style="font-size:8px;letter-spacing:-0.50px">次郎</span></span><span class="tg p" style="width:22.60px"><span style="font-size:8px;letter-spacing:-0.50px">魔族</span></span><span class="tg g" style="width:18.02px">SR</span><span class="tg g" style="width:15.10px"><span style="font-size:8px;letter-spacing:-0.50px">白</span></span><span class="tg g" style="width:15.10px"><span style="font-size:8px;letter-spacing:-0.50px">女</span></span><span class="tg g" style="width:22.60px"><span style="font-size:8px;letter-spacing:-0.50px">魔術</span></span></div></div>
<div class="a" style="left:690.00px;top:333.35px;font-size:7.5px;line-height:12px;color:#333;font-weight:bold;">2020<span style="font-size:8px;letter-spacing:-0.50px">年</span>07<span style="font-size:8px;letter-spacing:-0.50px">月</span>24<span style="font-size:8px;letter-spacing:-0.50px">日</span>(<span style="font-size:8px;letter-spacing:-0.50px">金</span>)</div>
<div class="box" style="left:205px;top:353.80px;width:673.5px;height:25.80px;background:#f5f7fb;border-bottom:1px solid #e6e6e6"></div>
<div class="box" style="left:218.8px;top:362.70px;width:8px;height:8px;border:1px solid #9c9c9c;border-radius:1.6px;background:#fff"></div>
<svg class="a" style="left:262px;top:364.30px" width="8" height="5" viewBox="0 0 8 5"><path d="M0.7 0.7 L4 4 L7.3 0.7" fill="none" stroke="#444" stroke-width="1"/></svg>
<div class="a" style="left:279.00px;top:362.65px;font-size:7.6px;line-height:8.6px;color:#333;border-bottom:1px dotted #7cb8e6;"><span style="font-size:8px;letter-spacing:-0.40px">イラスト</span>D</div>
<div class="a" style="left:435.50px;top:360.95px;font-size:7.45px;line-height:12px;color:#555;"><span style="font-size:8px;letter-spacing:-0.55px">サンプル案件</span> / <span style="font-size:8px;letter-spacing:-0.55px">アイテム</span> / <span style="font-size:8px;letter-spacing:-0.55px">イベント</span>D</div>
<div class="box" style="left:796.4px;top:357.10px;width:22.8px;height:19.2px;border:1px solid #e0e0e0;border-radius:2.5px;background:#fff"></div>
<svg class="a" style="left:803px;top:363.10px" width="10" height="8" viewBox="0 0 10 8"><path d="M0.5 0.8 H3.5 L4.4 1.8 H8 V2.9 H2.2 L0.5 6.6Z" fill="#333"/><path d="M2.4 3.5 H9.8 L8 7.3 H0.6Z" fill="#333"/></svg>
<div class="a" style="left:834.00px;top:362.65px;font-size:7.6px;line-height:8.6px;color:#333;border-bottom:1px dotted #7cb8e6;">40</div>
<div class="box" style="left:879px;top:0;width:10px;height:400px;background:#f9f9f9"></div>
<svg class="a" style="left:880.5px;top:3.4px" width="7" height="6" viewBox="0 0 7 6"><path d="M0.3 5.5 L3.5 0.6 L6.7 5.5Z" fill="#9a9a9a"/></svg>
<div class="box" style="left:880.9px;top:13.4px;width:6.3px;height:189.8px;background:#8c8c8c;border-radius:3.2px"></div>
</div>
<div class="box" style="left:215px;top:503.8px;width:18.8px;height:20px;background:#5563c1;border-radius:1px"></div>
<div class="a" style="left:243.00px;top:507.25px;font-size:7.5px;line-height:12px;color:#666;"><span style="font-size:8px;letter-spacing:-0.50px">件</span></div>
<div class="a" style="left:763.60px;top:507.25px;font-size:7.5px;line-height:12px;color:#666;"><span style="font-size:8px;letter-spacing:-0.50px">表示件数</span></div>
<div class="a" style="left:802.50px;top:507.25px;font-size:7.5px;line-height:12px;color:#666;">25</div>
<div class="box" style="left:833.5px;top:505px;width:1px;height:8px;background:#e4e4e4"></div>
<div class="box" style="left:879px;top:491.4px;width:10px;height:20px;background:#f9f9f9"></div>
<div class="a" style="left:843.00px;top:507.25px;font-size:7.5px;line-height:12px;color:#666;">1 - 2 / 2</div>
<div class="box" style="left:205px;top:491.2px;width:674px;height:1px;background:#ececec"></div>
<div class="box" style="left:899.3px;top:35px;width:124.7px;height:476px;background:#fff;border-left:1.8px solid #f0f0f0"></div>
<div class="box" style="left:922.6px;top:51.60px;width:17.8px;height:18.5px;background:#e6e6e6;border-radius:2px;box-shadow:0 1px 1px rgba(0,0,0,.2)"><div class="a" style="left:5px;top:5.2px"><svg width="8" height="8" viewBox="0 0 8 8"><path d="M0.5 0.5 H4 L7.5 4 L4 7.5 L0.5 4Z" fill="#444"/><circle cx="2.3" cy="2.3" r="0.8" fill="#e6e6e6"/></svg></div></div>
<div class="a" style="left:946.00px;top:55.15px;font-size:7.45px;line-height:12px;color:#555;"><span style="font-size:8px;letter-spacing:-0.55px">ラベル</span></div>
<div class="box" style="left:922.6px;top:88.90px;width:17.8px;height:18.5px;background:#e6e6e6;border-radius:2px;box-shadow:0 1px 1px rgba(0,0,0,.2)"><div class="a" style="left:5px;top:5.2px"><svg width="8" height="8" viewBox="0 0 8 8"><rect x="0.5" y="0.5" width="4.5" height="5.5" fill="#444"/><rect x="2.5" y="2" width="5" height="5.5" fill="#444" stroke="#e6e6e6" stroke-width="0.7"/></svg></div></div>
<div class="a" style="left:946.00px;top:92.45px;font-size:7.45px;line-height:12px;color:#555;"><span style="font-size:8px;letter-spacing:-0.55px">一括操作</span></div>
<div class="box" style="left:922.6px;top:126.80px;width:17.8px;height:18.5px;background:#e6e6e6;border-radius:2px;box-shadow:0 1px 1px rgba(0,0,0,.2)"><div class="a" style="left:5px;top:5.2px"><svg width="8" height="8" viewBox="0 0 8 8"><circle cx="4" cy="4" r="3.8" fill="#444"/><path d="M4 1.8 V6.2 M1.8 4 H6.2" stroke="#e6e6e6" stroke-width="1.1"/></svg></div></div>
<div class="a" style="left:946.00px;top:130.35px;font-size:7.45px;line-height:12px;color:#555;"><span style="font-size:8px;letter-spacing:-0.55px">制作物・工程追加</span></div>
<div class="box" style="left:922.6px;top:164.20px;width:17.8px;height:18.5px;background:#e6e6e6;border-radius:2px;box-shadow:0 1px 1px rgba(0,0,0,.2)"><div class="a" style="left:5px;top:5.2px"><svg width="8" height="8" viewBox="0 0 8 8"><path d="M1 1.3 H7 M3 0.5 H5" stroke="#777" stroke-width="0.9"/><path d="M1.6 2.2 H6.4 L6 7.8 H2Z" fill="#777"/></svg></div></div>
<div class="a" style="left:946.00px;top:167.75px;font-size:7.45px;line-height:12px;color:#555;"><span style="font-size:8px;letter-spacing:-0.55px">制作物・工程削除</span></div>
<div class="box" style="left:922.6px;top:201.70px;width:17.8px;height:18.5px;background:#e6e6e6;border-radius:2px;box-shadow:0 1px 1px rgba(0,0,0,.2)"><div class="a" style="left:5px;top:5.2px"><svg width="8" height="8" viewBox="0 0 8 8"><path d="M2.8 2 V1 H5.2 V2" fill="none" stroke="#444" stroke-width="0.8"/><rect x="0.3" y="2" width="7.4" height="5.3" fill="#444"/><path d="M0.3 4.3 H7.7" stroke="#e6e6e6" stroke-width="0.6"/></svg></div></div>
<div class="a" style="left:946.00px;top:205.25px;font-size:7.45px;line-height:12px;color:#555;"><span style="font-size:8px;letter-spacing:-0.55px">アーカイブ</span></div>
<div class="box" style="left:922.6px;top:239.20px;width:17.8px;height:18.5px;background:#e6e6e6;border-radius:2px;box-shadow:0 1px 1px rgba(0,0,0,.2)"><div class="a" style="left:5px;top:5.2px"><svg width="9" height="8" viewBox="0 0 9 8"><path d="M2 5.5 Q0.2 5.5 0.4 3.8 Q0.6 2.4 2 2.5 Q2.6 0.6 4.6 0.8 Q6.5 1 6.8 2.6 Q8.6 2.6 8.6 4 Q8.6 5.5 7 5.5Z" fill="#444"/><path d="M4.5 7.8 V3.6 M3 5 L4.5 3.5 L6 5" fill="none" stroke="#e6e6e6" stroke-width="0.9"/></svg></div></div>
<div class="a" style="left:946.00px;top:242.75px;font-size:7.45px;line-height:12px;color:#555;"><span style="font-size:8px;letter-spacing:-0.55px">インポート</span></div>
<div class="box" style="left:922.6px;top:276.70px;width:17.8px;height:18.5px;background:#e6e6e6;border-radius:2px;box-shadow:0 1px 1px rgba(0,0,0,.2)"><div class="a" style="left:5px;top:5.2px"><svg width="9" height="8" viewBox="0 0 9 8"><path d="M2 5.5 Q0.2 5.5 0.4 3.8 Q0.6 2.4 2 2.5 Q2.6 0.6 4.6 0.8 Q6.5 1 6.8 2.6 Q8.6 2.6 8.6 4 Q8.6 5.5 7 5.5Z" fill="#444"/><path d="M4.5 7.8 V3.6 M3 5 L4.5 3.5 L6 5" fill="none" stroke="#e6e6e6" stroke-width="0.9"/></svg></div></div>
<div class="a" style="left:946.00px;top:280.25px;font-size:7.45px;line-height:12px;color:#555;"><span style="font-size:8px;letter-spacing:-0.55px">エクスポート</span></div>
</body></html>
